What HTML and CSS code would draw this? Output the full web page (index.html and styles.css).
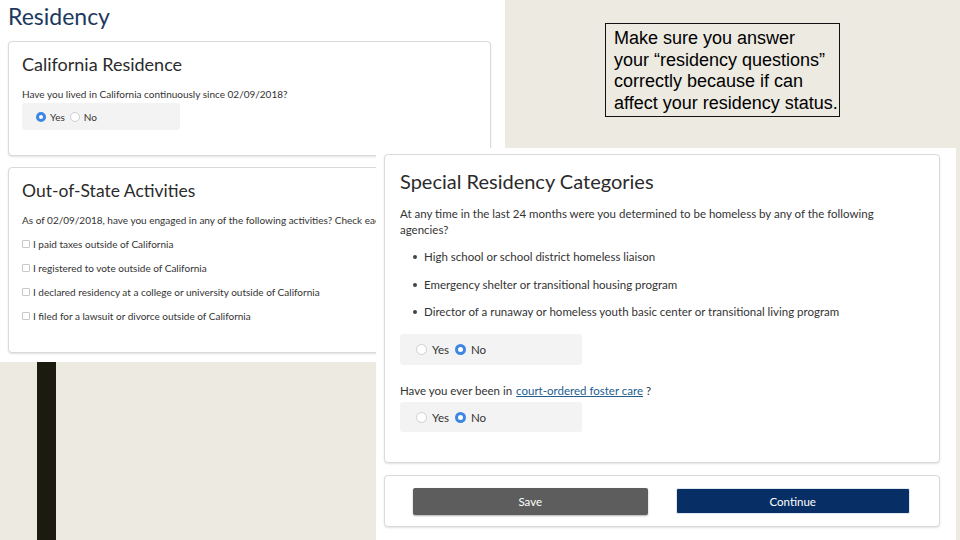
FILE: index.html
```html
<!DOCTYPE html>
<html lang="en">
<head>
<meta charset="utf-8">
<title>Residency</title>
<link rel="stylesheet" href="styles.css">
</head>
<body>
<div class="slide">
  <section class="shot shot-left">
    <h1 class="page-title">Residency</h1>
    <div class="card card-ca">
      <h2 class="card-title">California Residence</h2>
      <p class="q">Have you lived in California continuously since 02/09/2018?</p>
      <div class="radio-box small">
        <span class="radio on"></span><span class="lbl">Yes</span>
        <span class="radio"></span><span class="lbl">No</span>
      </div>
    </div>
    <div class="card card-oos">
      <h2 class="card-title">Out-of-State Activities</h2>
      <p class="q nowrap">As of 02/09/2018, have you engaged in any of the following activities? Check each that applies.</p>
      <ul class="checks">
        <li><span class="box"></span>I paid taxes outside of California</li>
        <li><span class="box"></span>I registered to vote outside of California</li>
        <li><span class="box"></span>I declared residency at a college or university outside of California</li>
        <li><span class="box"></span>I filed for a lawsuit or divorce outside of California</li>
      </ul>
    </div>
  </section>

  <div class="bar"></div>

  <div class="note">Make sure you answer<br>your “residency questions”<br>correctly because if can<br>affect your residency status.</div>

  <section class="shot shot-right">
    <div class="card card-special">
      <h2 class="card-title big">Special Residency Categories</h2>
      <p class="para first">At any time in the last 24 months were you determined to be homeless by any of the following agencies?</p>
      <ul class="bullets">
        <li>High school or school district homeless liaison</li>
        <li>Emergency shelter or transitional housing program</li>
        <li>Director of a runaway or homeless youth basic center or transitional living program</li>
      </ul>
      <div class="radio-box large">
        <span class="radio"></span><span class="lbl">Yes</span>
        <span class="radio on"></span><span class="lbl">No</span>
      </div>
      <p class="para q2">Have you ever been in <a href="#" class="link">court-ordered foster care</a> ?</p>
      <div class="radio-box large second">
        <span class="radio"></span><span class="lbl">Yes</span>
        <span class="radio on"></span><span class="lbl">No</span>
      </div>
    </div>
    <div class="card card-actions">
      <button class="btn btn-save">Save</button>
      <button class="btn btn-continue">Continue</button>
    </div>
  </section>
</div>
</body>
</html>
```
FILE: styles.css
```css
* { box-sizing: border-box; }
html, body { margin: 0; padding: 0; }
body {
  width: 960px;
  height: 540px;
  overflow: hidden;
  background: #edeae2;
  font-family: Lato, "Noto Sans", sans-serif;
  color: #333;
}
.slide {
  position: relative;
  width: 960px;
  height: 540px;
}

/* screenshot panels placed on the slide canvas */
.shot {
  position: absolute;
  background: #fff;
  overflow: hidden;
}
.shot-left {
  left: 0;
  top: 0;
  width: 505px;
  height: 362px;
  padding: 3px 14px 0 8px;
}
.shot-right {
  left: 376px;
  top: 148px;
  width: 580px;
  height: 392px;
  padding: 6px 16px 0 8px;
  z-index: 2;
}

.page-title {
  margin: 0;
  font-size: 23px;
  line-height: 27px;
  font-weight: 400;
  color: #1c3a5e;
}

.card {
  background: #fff;
  border: 1px solid #dadada;
  border-radius: 4px;
  box-shadow: 0 1px 2px rgba(0,0,0,0.12);
}
.card-ca {
  margin-top: 11px;
  height: 115px;
  padding: 11px 13px 0;
}
.card-oos {
  margin-top: 11px;
  height: 186px;
  padding: 12px 13px 0;
  white-space: nowrap;
}
.card-title {
  margin: 0;
  font-size: 18px;
  line-height: 22px;
  font-weight: 400;
  color: #2b2b2b;
}
.card-oos .card-title { font-size: 17.5px; }
.q {
  margin: 13px 0 0;
  font-size: 10px;
  line-height: 13px;
  color: #333;
}
.card-oos .q { margin-top: 12px; }
.nowrap { white-space: nowrap; }

.radio-box {
  display: flex;
  align-items: center;
  background: #f3f3f3;
  border-radius: 3px;
}
.radio-box.small {
  margin-top: 2px;
  width: 158px;
  height: 27px;
  padding-left: 14px;
  font-size: 10px;
}
.radio-box.small .radio { width: 10px; height: 10px; }
.radio-box.small .lbl { margin: 0 5px 0 4px; }

.radio {
  display: inline-block;
  flex: none;
  border-radius: 50%;
  border: 1px solid #cfcfcf;
  background: #fff;
}
.radio.on {
  border: 3px solid #3d86e4;
  background: #fff;
}
.lbl { color: #333; }

.checks {
  list-style: none;
  margin: 5px 0 0;
  padding: 0;
  font-size: 10px;
}
.checks li {
  height: 24px;
  display: flex;
  align-items: center;
}
.box {
  width: 8px;
  height: 8px;
  border: 1px solid #c9c9c9;
  border-radius: 1px;
  margin-right: 3px;
  flex: none;
}

/* decorative slide bar */
.bar {
  position: absolute;
  left: 37px;
  top: 362px;
  width: 19px;
  height: 178px;
  background: #1b1b10;
}

/* slide annotation */
.note {
  position: absolute;
  left: 605px;
  top: 23px;
  width: 235px;
  height: 94px;
  border: 1px solid #111;
  padding: 4px 0 0 8px;
  font-family: "Liberation Sans", Arial, sans-serif;
  font-size: 18px;
  line-height: 21.5px;
  color: #000;
  white-space: nowrap;
}

/* right screenshot */
.card-special {
  height: 309px;
  padding: 14px 15px 0;
}
.card-title.big {
  font-size: 20px;
  line-height: 24px;
  color: #2b2b2b;
}
.para {
  margin: 10px 0 0;
  font-size: 11.5px;
  line-height: 16px;
  color: #333;
}
.para.first { margin-top: 13px; }
.bullets {
  margin: 11px 0 0;
  padding: 0 0 0 24px;
  font-size: 11.5px;
  line-height: 16px;
  list-style: none;
}
.bullets li {
  position: relative;
  margin-bottom: 11.5px;
}
.bullets li:last-child { margin-bottom: 0; }
.bullets li::before {
  content: "";
  position: absolute;
  left: -11px;
  top: 6px;
  width: 4px;
  height: 4px;
  border-radius: 50%;
  background: #444;
}
.radio-box.large {
  margin-top: 14px;
  width: 182px;
  height: 31px;
  padding-left: 16px;
  font-size: 11.5px;
}
.radio-box.large .radio { width: 11px; height: 11px; }
.radio-box.large .lbl { margin: 0 6px 0 5px; }
.radio-box.large.second { margin-top: 3px; height: 30px; }
.q2 { margin-top: 18px; }
.link {
  color: #23608f;
  text-decoration: underline;
  margin-left: 1px;
}

.card-actions {
  margin-top: 12px;
  height: 52px;
  padding: 0 29px 0 28px;
  display: grid;
  grid-template-columns: 1fr 1fr;
  gap: 28px;
  align-items: center;
}
.btn {
  height: 26px;
  border: none;
  border-radius: 2px;
  color: #fff;
  font-family: Lato, "Noto Sans", sans-serif;
  font-size: 11.5px;
  padding: 0;
}
.btn-save {
  background: #5d5d5d;
  box-shadow: 0 1px 2px rgba(0,0,0,0.3);
  height: 27px;
}
.btn-continue {
  background: #072f66;
  border: 1px solid #dfe6ee;
  height: 26px;
}
```
